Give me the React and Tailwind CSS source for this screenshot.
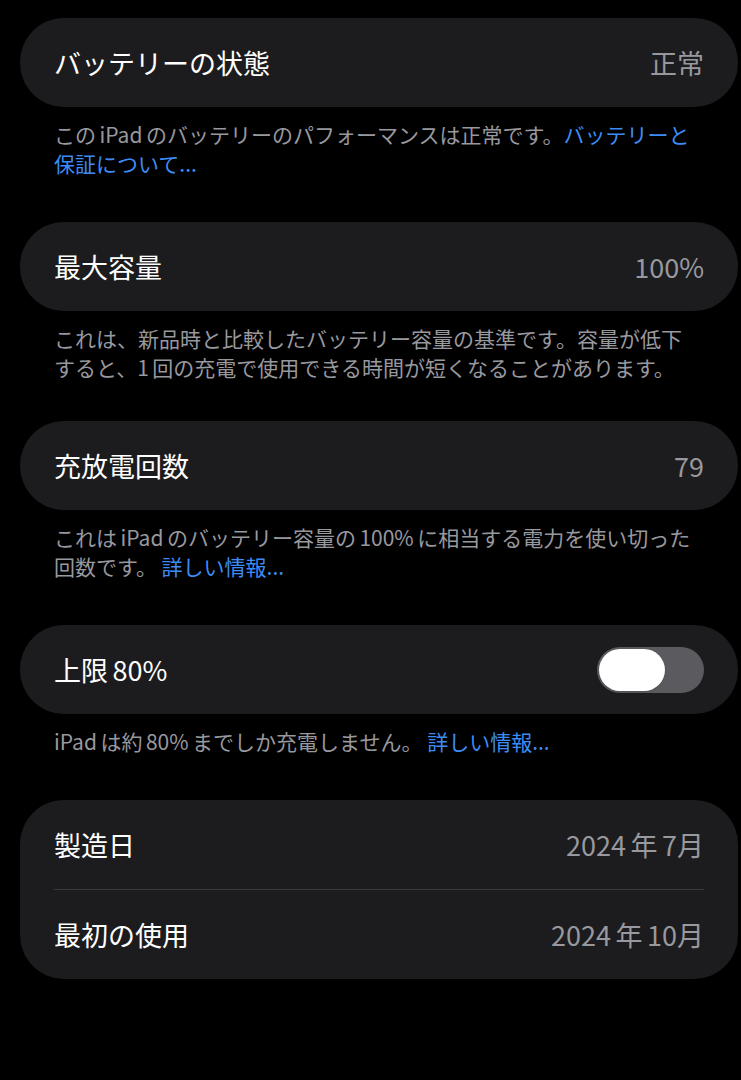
import React, { useState } from 'react';

const font = { fontFamily: '"Noto Sans CJK JP", "Noto Sans", sans-serif' };

// iOS puts a narrow gap between Japanese and Latin/digits
const t = '\u2006';

function Row({ label, value, children }) {
  return (
    <div className="h-[89px] px-[34px] flex items-center justify-between">
      <span className="text-[27px] text-white leading-none">{label}</span>
      {value && <span className="text-[27px] text-[#98989f] leading-none">{value}</span>}
      {children}
    </div>
  );
}

function Card({ children }) {
  return <div className="ml-[20px] w-[718px] rounded-[44px] bg-[#1c1c1e]">{children}</div>;
}

function Footer({ tight, children }) {
  return (
    <p
      className={`pl-[54px] pr-[48px] pt-[13px] text-[21px] leading-[29px] text-[#98989f] ${tight ? 'pb-[39px]' : 'pb-[44px]'}`}
    >
      {children}
    </p>
  );
}

const Link = ({ children }) => <span className="text-[#3d8cf5]">{children}</span>;

export default function App() {
  const [limit, setLimit] = useState(false);

  return (
    <div className="min-h-[1080px] bg-black pt-[18px]" style={font}>
      <Card>
        <Row label="バッテリーの状態" value="正常" />
      </Card>
      <Footer>
        {`この${t}iPad${t}のバッテリーのパフォーマンスは正常です。`}<Link>バッテリーと保証について...</Link>
      </Footer>

      <Card>
        <Row label="最大容量" value="100%" />
      </Card>
      <Footer tight>
        {`これは、新品時と比較したバッテリー容量の基準です。容量が低下すると、1${t}回の充電で使用できる時間が短くなることがあります。`}
      </Footer>

      <Card>
        <Row label="充放電回数" value="79" />
      </Card>
      <Footer>
        {`これは${t}iPad${t}のバッテリー容量の${t}100%${t}に相当する電力を使い切った回数です。 `}<Link>詳しい情報...</Link>
      </Footer>

      <Card>
        <Row label={`上限${t}80%`}>
          <button
            onClick={() => setLimit(!limit)}
            className={`w-[107px] h-[46px] rounded-full p-[2px] flex ${limit ? 'bg-[#34c759] justify-end' : 'bg-[#5b5b5f] justify-start'}`}
          >
            <span className="w-[66px] h-[42px] rounded-full bg-white shadow" />
          </button>
        </Row>
      </Card>
      <Footer>
        {`iPad${t}は約${t}80%${t}までしか充電しません。 `}<Link>詳しい情報...</Link>
      </Footer>

      <Card>
        <Row label="製造日" value={`2024${t}年${t}7月`} />
        <div className="mx-[34px] h-px bg-[#3a3a3c]" />
        <Row label="最初の使用" value={`2024${t}年${t}10月`} />
      </Card>
    </div>
  );
}
